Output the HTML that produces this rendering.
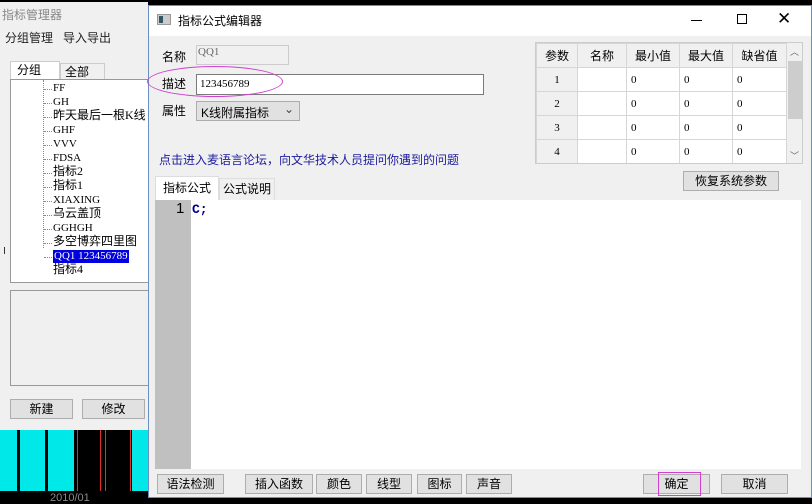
<!DOCTYPE html>
<html><head><meta charset="utf-8"><style>
*{margin:0;padding:0;box-sizing:border-box;white-space:nowrap}
body{width:812px;height:502px;overflow:hidden;background:#000;position:relative;font-family:"Liberation Sans","Noto Sans CJK SC",sans-serif;font-size:12px;color:#000}
.a{position:absolute}
.btn{position:absolute;background:#e1e1e1;border:1px solid #adadad;text-align:center;font-size:12px;line-height:18px}
.tr{position:absolute;left:52px;font-family:"Liberation Serif","Noto Sans CJK SC",serif;font-size:11px;line-height:13px}
.dot{position:absolute;left:43px;width:8px;border-top:1px dotted #888}
table{border-collapse:collapse}
td{border:1px solid #d6d6d6;height:24px;font-family:"Liberation Serif",serif;font-size:11px;padding-left:4px;background:#fff}
</style></head><body>
<div class="a" style="left:0;top:2px;width:148px;height:428px;background:#f0f0f0"></div>
<div class="a" style="left:2px;top:6px;color:#888;font-size:12px">指标管理器</div>
<div class="a" style="left:5px;top:29px;font-size:12px;color:#222">分组管理&nbsp;&nbsp;&nbsp;导入导出</div>
<div class="a" style="left:10px;top:61px;width:50px;height:19px;background:#fff;border:1px solid #ccc;border-bottom:none;padding-left:6px;line-height:17px">分组</div>
<div class="a" style="left:60px;top:63px;width:45px;height:16px;background:#f0f0f0;border:1px solid #ccc;border-bottom:none;padding-left:4px;line-height:16px">全部</div>
<div class="a" style="left:10px;top:79px;width:140px;height:204px;background:#fff;border:1px solid #999;overflow:hidden">
<div class="a" style="left:32px;top:0;height:168px;border-left:1px dotted #888"></div>
<div class="dot" style="top:9px;left:33px"></div><div class="tr" style="left:42px;top:2px">FF</div>
<div class="dot" style="top:23px;left:33px"></div><div class="tr" style="left:42px;top:16px">GH</div>
<div class="dot" style="top:37px;left:33px"></div><div class="tr" style="left:42px;top:29px;font-size:12px">昨天最后一根K线</div>
<div class="dot" style="top:51px;left:33px"></div><div class="tr" style="left:42px;top:44px">GHF</div>
<div class="dot" style="top:65px;left:33px"></div><div class="tr" style="left:42px;top:58px">VVV</div>
<div class="dot" style="top:79px;left:33px"></div><div class="tr" style="left:42px;top:72px">FDSA</div>
<div class="dot" style="top:93px;left:33px"></div><div class="tr" style="left:42px;top:85px;font-size:12px">指标2</div>
<div class="dot" style="top:107px;left:33px"></div><div class="tr" style="left:42px;top:99px;font-size:12px">指标1</div>
<div class="dot" style="top:121px;left:33px"></div><div class="tr" style="left:42px;top:114px">XIAXING</div>
<div class="dot" style="top:135px;left:33px"></div><div class="tr" style="left:42px;top:127px;font-size:12px">乌云盖顶</div>
<div class="dot" style="top:149px;left:33px"></div><div class="tr" style="left:42px;top:142px">GGHGH</div>
<div class="dot" style="top:163px;left:33px"></div><div class="tr" style="left:42px;top:155px;font-size:12px">多空博弈四里图</div>
<div class="dot" style="top:177px;left:33px"></div><div class="tr" style="left:42px;top:170px;background:#0000e0;color:#fff;padding:0 1px">QQ1 123456789</div>
<div class="tr" style="left:42px;top:183px;font-size:12px">指标4</div>
</div>
<div class="a" style="left:4px;top:247px;width:1px;height:7px;background:#333"></div>
<div class="a" style="left:10px;top:290px;width:140px;height:96px;border:1px solid #999;background:#f0f0f0"></div>
<div class="btn" style="left:10px;top:399px;width:63px;height:20px">新建</div>
<div class="btn" style="left:82px;top:399px;width:63px;height:20px">修改</div>
<div class="a" style="left:0;top:430px;width:148px;height:61px;background:#00e8e8"></div>
<div class="a" style="left:17px;top:430px;width:3px;height:61px;background:#000"></div>
<div class="a" style="left:45px;top:430px;width:3px;height:61px;background:#000"></div>
<div class="a" style="left:74px;top:430px;width:58px;height:61px;background:#000"></div>
<div class="a" style="left:77px;top:430px;width:1px;height:61px;background:#e03030"></div>
<div class="a" style="left:100px;top:430px;width:1px;height:61px;background:#e03030"></div>
<div class="a" style="left:105px;top:430px;width:1px;height:61px;background:#e03030"></div>
<div class="a" style="left:130px;top:430px;width:1px;height:61px;background:#e03030"></div>
<div class="a" style="left:50px;top:492px;color:#888;font-size:11px">2010/01</div>
<div class="a" style="left:148px;top:5px;width:664px;height:493px;background:#f0f0f0;border:1px solid #6a8fc0"></div>
<div class="a" style="left:149px;top:6px;width:662px;height:30px;background:#fff"></div>
<div class="a" style="left:157px;top:14px;width:14px;height:11px;background:#ccc;border:1px solid #999"><div style="position:absolute;left:1px;top:1px;width:4px;height:7px;background:#356"></div></div>
<div class="a" style="left:178px;top:12px;font-size:12px">指标公式编辑器</div>
<div class="a" style="left:691px;top:20px;width:11px;height:1px;background:#000"></div>
<div class="a" style="left:737px;top:14px;width:10px;height:10px;border:1px solid #000"></div>
<div class="a" style="left:777px;top:9px;font-size:17px;font-weight:300">✕</div>
<div class="a" style="left:162px;top:48px">名称</div>
<div class="a" style="left:196px;top:45px;width:93px;height:20px;border:1px solid #ccc;font-family:'Liberation Serif',serif;font-size:11px;color:#666;padding-left:1px">QQ1</div>
<div class="a" style="left:162px;top:75px">描述</div>
<div class="a" style="left:196px;top:74px;width:288px;height:21px;background:#fff;border:1px solid #7a7a7a;font-family:'Liberation Serif',serif;font-size:11px;padding:3px 3px">123456789</div>
<div class="a" style="left:147px;top:66px;width:136px;height:31px;border:1px solid #d040d0;border-radius:50%"></div>
<div class="a" style="left:162px;top:102px">属性</div>
<div class="a" style="left:196px;top:101px;width:104px;height:20px;background:#e1e1e1;border:1px solid #adadad;padding:2px 4px;font-size:12px">K线附属指标<span style="position:absolute;right:5px;top:0;color:#444">⌄</span></div>
<div class="a" style="left:159px;top:151px;color:#1c1c9c;font-size:12px">点击进入麦语言论坛，向文华技术人员提问你遇到的问题</div>
<div class="a" style="left:535px;top:42px;width:268px;height:122px;background:#fff;border:1px solid #ccc;overflow:hidden">
<table style="width:251px">
<tr><td style="background:#f0f0f0;text-align:center;padding:0;font-family:'Noto Sans CJK SC',sans-serif;font-size:12px;width:41px;height:23px">参数</td><td style="background:#f0f0f0;text-align:center;padding:0;font-family:'Noto Sans CJK SC',sans-serif;font-size:12px;width:49px">名称</td><td style="background:#f0f0f0;text-align:center;padding:0;font-family:'Noto Sans CJK SC',sans-serif;font-size:12px;width:53px">最小值</td><td style="background:#f0f0f0;text-align:center;padding:0;font-family:'Noto Sans CJK SC',sans-serif;font-size:12px;width:53px">最大值</td><td style="background:#f0f0f0;text-align:center;padding:0;font-family:'Noto Sans CJK SC',sans-serif;font-size:12px">缺省值</td></tr>
<tr><td style="background:#f0f0f0;text-align:center;padding:0">1</td><td></td><td>0</td><td>0</td><td>0</td></tr>
<tr><td style="background:#f0f0f0;text-align:center;padding:0">2</td><td></td><td>0</td><td>0</td><td>0</td></tr>
<tr><td style="background:#f0f0f0;text-align:center;padding:0">3</td><td></td><td>0</td><td>0</td><td>0</td></tr>
<tr><td style="background:#f0f0f0;text-align:center;padding:0">4</td><td></td><td>0</td><td>0</td><td>0</td></tr>
<tr><td style="background:#f0f0f0"></td><td></td><td></td><td></td><td></td></tr>
</table>
<div class="a" style="left:251px;top:0;width:16px;height:122px;background:#f0f0f0"></div>
<div class="a" style="left:252px;top:18px;width:14px;height:58px;background:#cdcdcd"></div>
<div class="a" style="left:254px;top:2px;font-size:9px;color:#666">︿</div>
<div class="a" style="left:254px;top:106px;font-size:9px;color:#666">﹀</div>
</div>
<div class="btn" style="left:683px;top:171px;width:96px;height:20px">恢复系统参数</div>
<div class="a" style="left:155px;top:176px;width:64px;height:24px;background:#fff;border:1px solid #ddd;border-bottom:none;padding:2px 7px;font-size:12px">指标公式</div>
<div class="a" style="left:219px;top:178px;width:56px;height:22px;border:1px solid #ddd;border-bottom:none;padding:1px 3px;font-size:12px">公式说明</div>
<div class="a" style="left:155px;top:200px;width:646px;height:269px;background:#fff"></div>
<div class="a" style="left:155px;top:200px;width:36px;height:269px;background:#c0c0c0"></div>
<div class="a" style="left:176px;top:200px;font-size:15px;font-family:'Liberation Sans',sans-serif">1</div>
<div class="a" style="left:192px;top:202px;font-size:13px;font-family:'Liberation Mono',monospace;font-weight:bold;color:#00008b">C;</div>
<div class="btn" style="left:157px;top:474px;width:67px;height:20px">语法检测</div>
<div class="btn" style="left:245px;top:474px;width:68px;height:20px">插入函数</div>
<div class="btn" style="left:316px;top:474px;width:46px;height:20px">颜色</div>
<div class="btn" style="left:366px;top:474px;width:46px;height:20px">线型</div>
<div class="btn" style="left:417px;top:474px;width:45px;height:20px">图标</div>
<div class="btn" style="left:466px;top:474px;width:46px;height:20px">声音</div>
<div class="btn" style="left:643px;top:474px;width:67px;height:20px">确定</div>
<div class="a" style="left:658px;top:472px;width:43px;height:24px;border:1px solid #d040d0"></div>
<div class="btn" style="left:721px;top:474px;width:67px;height:20px">取消</div>
</body></html>
